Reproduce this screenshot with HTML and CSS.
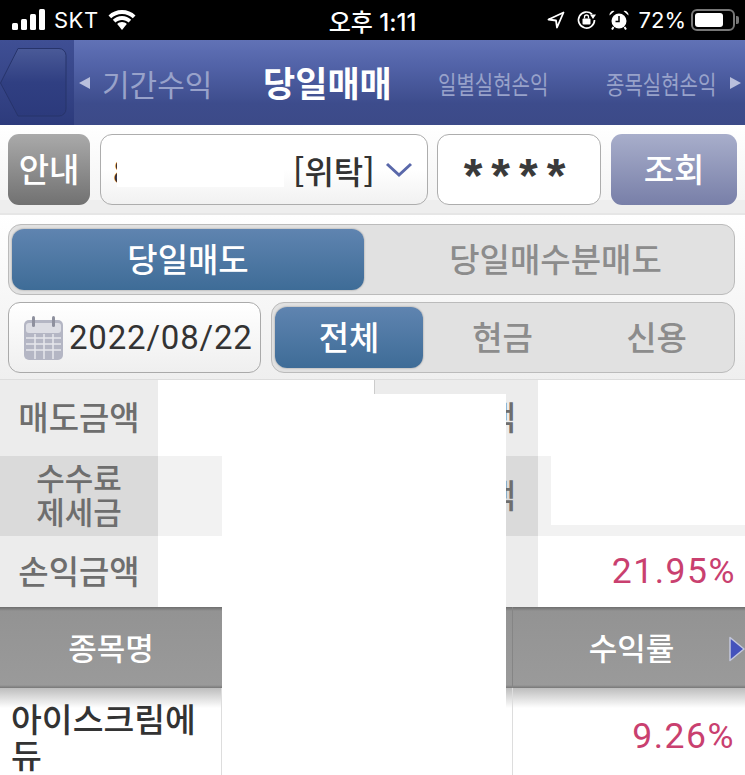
FILE: index.html
```html
<!DOCTYPE html>
<html lang="ko">
<head>
<meta charset="utf-8">
<title>당일매매</title>
<link rel="stylesheet" href="styles.css">
</head>
<body>
<div class="screen">
  <header class="status">
    <div class="status-side">
      <svg class="signal" width="34" height="24" viewBox="0 0 34 24"><rect x="0" y="15" width="6" height="7" rx="1.5"/><rect x="9" y="11" width="6" height="11" rx="1.5"/><rect x="18" y="6" width="6" height="16" rx="1.5"/><rect x="27" y="1" width="6" height="21" rx="1.5"/></svg>
      <span class="carrier">SKT</span>
      <svg class="wifi" width="30" height="22" viewBox="0 0 30 22"><path d="M15 5c4.300 0 8 1.700 10.800 4.300l2.700-2.900C24.900 3 20.200 1 15 1S5.100 3 1.500 6.400l2.700 2.900C7 6.700 10.700 5 15 5z"/><path d="M15 11c2.500 0 4.800 1 6.600 2.600l2.600-2.800C21.700 8.500 18.500 7.100 15 7.100s-6.700 1.400-9.200 3.700l2.600 2.800C10.200 12 12.500 11 15 11z"/><path d="M15 13c-1.900 0-3.500.7-4.800 1.900L15 21l4.800-6.100C18.500 13.700 16.900 13 15 13z"/></svg>
    </div>
    <div class="clock">오후 1:11</div>
    <div class="status-side status-right">
      <svg width="18" height="18" viewBox="0 0 18 18" fill="none" stroke="#fff" stroke-width="1.800" stroke-linejoin="round"><path d="M16.500 1.500 1.500 8.500 9 9.500 10 16.500z"/></svg>
      <svg class="gap-lock" width="22" height="20" viewBox="0 0 22 20" fill="none"><path d="M18.500 10a8 8 0 1 1-2.500-5.800" stroke="#fff" stroke-width="1.700"/><path d="M14 4.500h6L17 9z" fill="#fff"/><rect x="6.500" y="8.500" width="8" height="6" rx="1" fill="#fff"/><path d="M8.500 8.500V7a2 2 0 0 1 4 0v1.500" stroke="#fff" stroke-width="1.300"/></svg>
      <svg class="gap-alarm" width="22" height="22" viewBox="0 0 22 22" fill="none"><circle cx="11" cy="12" r="7.500" fill="#fff"/><path d="M11 7v5.500H7.500" stroke="#000" stroke-width="1.500"/><path d="M1.500 6.500a4 4 0 0 1 5-4.500zM20.500 6.500a4 4 0 0 0-5-4.500z" fill="#fff"/><path d="M5.500 18 4 20.500M16.500 18l1.500 2.500" stroke="#fff" stroke-width="2"/></svg>
      <span class="battery-text">72%</span>
      <div class="battery"><div class="battery-fill"></div></div>
      <div class="battery-tip"></div>
    </div>
  </header>

  <nav class="nav">
    <div class="back">
      <svg width="68" height="72" viewBox="0 0 68 72"><defs><linearGradient id="bk" x1="0" y1="0" x2="0" y2="1"><stop offset="0" stop-color="#4a5a98"/><stop offset=".5" stop-color="#303f82"/><stop offset="1" stop-color="#2c3a7c"/></linearGradient></defs><path d="M18 1.500H59a7 7 0 0 1 7 7V62a7 7 0 0 1-7 7H18L0.500 36z" fill="url(#bk)" stroke="#27346b" stroke-width="1"/></svg>
    </div>
    <div class="tabs">
      <div class="tab tab-period"><i class="tri-left"></i>기간수익</div>
      <div class="tab tab-active">당일매매</div>
      <div class="tab-narrow tab-daily"><span>일별실현손익</span></div>
      <div class="tab-narrow tab-stock"><span>종목실현손익</span><i class="tri-right"></i></div>
    </div>
  </nav>

  <section class="toolbar">
    <button class="btn btn-info">안내</button>
    <div class="field field-account">
      <span class="acc-num">8</span>
      <span class="acc-type">[위탁]</span>
      <svg width="28" height="16" viewBox="0 0 28 16" fill="none"><path d="M2 2l12 11L26 2" stroke="#5a68aa" stroke-width="3"/></svg>
    </div>
    <div class="field field-pass">****</div>
    <button class="btn btn-query">조회</button>
  </section>

  <section class="filters">
    <div class="segment segment-top">
      <div class="seg-item seg-on seg-sell">당일매도</div>
      <div class="seg-item seg-off seg-grow seg-nudge">당일매수분매도</div>
    </div>
    <div class="filter-row">
      <div class="date">
        <svg width="42" height="46" viewBox="0 0 42 46"><rect x="1" y="5" width="39" height="40" rx="5" fill="#b4b6c4"/><rect x="3" y="8" width="35" height="10" rx="3" fill="#dcdde4"/><path d="M3 23h35M3 29h35M3 35h35M12 19v25M21 19v25M30 19v25" stroke="#e6e7ec" stroke-width="1.500"/><rect x="9" y="1" width="3" height="11" rx="1.500" fill="#8e909e"/><rect x="29" y="1" width="3" height="11" rx="1.500" fill="#8e909e"/></svg>
        <span>2022/08/22</span>
      </div>
      <div class="segment segment-kind">
        <div class="seg-item seg-on seg-all">전체</div>
        <div class="seg-item seg-off seg-cash">현금</div>
        <div class="seg-item seg-off seg-grow">신용</div>
      </div>
    </div>
  </section>

  <section class="summary">
    <div class="cell label">매도금액</div><div class="cell value"></div><div class="cell label label-right label-first">매수금액</div><div class="cell value"></div>
    <div class="cell label alt two-line">수수료<br>제세금</div><div class="cell value alt-v"></div><div class="cell label alt label-right">정산금액</div><div class="cell value alt-v"></div>
    <div class="cell label">손익금액</div><div class="cell value"></div><div class="cell label label-right"></div><div class="cell value rate">21.95%</div>
  </section>

  <section class="grid-head">
    <div class="head-name">종목명</div>
    <div class="head-mid"></div>
    <div class="head-rate">수익률
      <svg class="head-arrow" width="16" height="26" viewBox="0 0 16 26"><path d="M1 1.500 15 13 1 24.500z" fill="#4452bc" stroke="#c3c7dc" stroke-width="1.500" stroke-linejoin="round"/></svg>
    </div>
  </section>
  <section class="grid-row">
    <div class="row-name">아이스크림에듀</div>
    <div class="row-mid"></div>
    <div class="row-rate">9.26%</div>
  </section>

  <div class="mask mask-account"></div>
  <div class="mask mask-center"></div>
  <div class="mask mask-right"></div>
</div>
</body>
</html>
```
FILE: styles.css
```css
* { box-sizing: border-box; }
html, body { margin: 0; padding: 0; background: #fff; }
body { font-family: "Noto Sans CJK KR", "Noto Sans", sans-serif; }
.screen { position: relative; width: 745px; height: 775px; overflow: hidden; }

.status { height: 40px; background: #000; color: #fff; display: grid; grid-template-columns: 1fr auto 1fr; align-items: center; font-family: "Noto Sans CJK KR", Inter, sans-serif; }
.status-side { display: flex; align-items: center; padding-left: 12px; fill: #fff; }
.status-right { justify-content: flex-end; padding: 0 6px 0 0; }
.carrier { font-family: Inter, sans-serif; font-size: 22px; margin: 0 8px 0 8px; letter-spacing: .5px; }
.clock { font-size: 24px; font-weight: 500; font-family: Inter, "Noto Sans CJK KR", sans-serif; }
.gap-lock { margin-left: 11px; }
.gap-alarm { margin-left: 10px; }
.battery-text { font-family: Inter, sans-serif; font-size: 22px; margin: 0 5px 0 9px; }
.battery { width: 44px; height: 22px; border: 2px solid #777; border-radius: 6px; padding: 2px; }
.battery-fill { width: 28px; height: 14px; background: #fff; border-radius: 3px; }
.battery-tip { width: 3px; height: 8px; background: #777; border-radius: 0 2px 2px 0; margin-left: 1px; }

.nav { height: 85px; display: flex; background: linear-gradient(#6172b6, #5263a8 30%, #3d4c8c 75%, #3c4a88); }
.back { width: 74px; background: linear-gradient(#3f4f94, #2d3b7c); padding: 7px 0 0 0; flex: none; }
.back svg { display: block; }
.tabs { flex: 1; position: relative; display: flex; align-items: center; color: #a3abd0; }
.tab { font-size: 30px; font-weight: 400; white-space: nowrap; display: flex; align-items: center; }
.tab-period { width: 184px; margin-left: 5px; color: #98a2ca; }
.tri-left { width: 0; height: 0; border: 6px solid transparent; border-left: 0; border-right: 11px solid #b9bfdc; margin-right: 12px; }
.tab-active { width: 175px; color: #fff; font-weight: 700; font-size: 35px; padding-bottom: 2px; }
.tab-narrow { height: 40px; display: flex; align-items: center; font-size: 25px; white-space: nowrap; color: #98a2ca; }
.tab-narrow span { display: inline-block; transform: scaleX(.8); transform-origin: left center; width: 114px; }
.tab-daily { width: 168px; }
.tab-stock { width: 139px; }
.tri-right { flex: none; width: 0; height: 0; border: 6px solid transparent; border-right: 0; border-left: 11px solid #b9bfdc; margin-left: 10px; }

.toolbar { height: 90px; display: flex; align-items: flex-start; padding: 9px 8px 0 8px; background: linear-gradient(#fff, #f4f4f4 85%, #eee 85%); border-bottom: 2px solid #e6e6e6; }
.btn { width: 82px; height: 71px; border: 0; border-radius: 11px; color: #fff; font-family: inherit; font-size: 33px; font-weight: 500; padding: 0 0 3px; flex: none; }
.btn-info { background: linear-gradient(#aaa, #717171); }
.btn-query { width: 126px; margin-left: 10px; background: linear-gradient(#a8aecb, #787fa8); }
.field { height: 71px; border: 1px solid #adadad; border-radius: 12px; background: #fff; color: #333; flex: none; }
.field-account { width: 328px; margin-left: 10px; display: flex; align-items: center; font-size: 32px; padding-left: 12px; background: linear-gradient(#fff 50%, #f1f1f1); }
.acc-num { width: 180px; }
.acc-type { margin-right: 10px; font-weight: 500; white-space: nowrap; }
.field-pass { width: 164px; margin-left: 9px; display: flex; justify-content: center; align-items: center; font-family: "Liberation Sans", sans-serif; font-weight: 700; font-size: 48px; letter-spacing: 9px; padding: 11px 4px 0 4px; color: #3a3a3a; }

.filters { height: 165px; padding: 9px 10px 0 8px; background: linear-gradient(#fff, #efefef); border-bottom: 1px solid #ddd; }
.segment { display: flex; background: #e1e1e1; border: 1px solid #bbb; border-radius: 13px; padding: 4px 3px; }
.segment-top { height: 71px; }
.seg-item { display: flex; justify-content: center; align-items: center; font-size: 33px; font-weight: 500; border-radius: 12px; padding-bottom: 3px; }
.seg-on { background: linear-gradient(#5f84b0, #3e6c97); color: #fff; box-shadow: 0 0 2px #888; }
.seg-off { color: #8c8c8c; }
.seg-sell { width: 352px; }
.seg-grow { flex: 1; }
.seg-nudge { padding-left: 16px; }
.filter-row { display: flex; margin-top: 7px; gap: 10px; }
.date { width: 253px; height: 71px; border: 1px solid #aaa; border-radius: 12px; background: linear-gradient(#fff, #efefef); display: flex; align-items: center; padding-left: 14px; font-family: Roboto, sans-serif; font-size: 33px; color: #333; gap: 4px; }
.date span { letter-spacing: .8px; }
.date svg { flex: none; }
.segment-kind { width: 464px; height: 71px; }
.seg-all { width: 148px; }
.seg-cash { width: 159px; }

.summary { display: grid; grid-template-columns: 158px 216px 164px 207px; grid-template-rows: 76px 80px 71px; height: 227px; }
.cell { display: flex; align-items: center; justify-content: center; font-size: 33px; padding-bottom: 4px; }
.label { background: #ececec; color: #6e6e6e; font-weight: 500; }
.label.alt { background: #dadada; }
.label-right { justify-content: flex-end; padding-right: 22px; }
.label-first { border-left: 1px solid #ccc; }
.two-line { font-size: 31px; line-height: 34px; text-align: center; }
.value { background: #fff; }
.alt-v { background: #f2f2f2; }
.rate { justify-content: flex-end; padding: 0 9px 2px 0; color: #c9406f; font-family: Roboto, sans-serif; font-size: 35.500px; letter-spacing: 1.500px; }

.grid-head { height: 81px; display: grid; grid-template-columns: 222px 290px 233px; background: linear-gradient(#6e6e6e, #939393 4px, #9a9a9a 78px, #777); color: #fff; font-size: 31px; font-weight: 500; }
.head-name, .head-rate { display: flex; align-items: center; justify-content: center; padding-bottom: 2px; }
.head-rate { position: relative; padding-left: 5px; border-left: 1px solid #858585; }
.head-arrow { position: absolute; right: 0; top: 29px; }

.grid-row { height: 87px; display: grid; grid-template-columns: 222px 290px 233px; background: linear-gradient(#bdbdbd, #fff 20px); }
.row-name { font-size: 33.500px; font-weight: 500; color: #333; line-height: 36px; padding: 12px 0 0 11px; word-break: break-all; border-right: 1px solid #ddd; }
.row-rate { display: flex; align-items: center; justify-content: flex-end; padding: 8px 10px 0 0; color: #c9406f; font-family: Roboto, sans-serif; font-size: 35.500px; letter-spacing: 1.500px; border-left: 1px solid #ddd; }

.mask { position: absolute; background: #fff; }
.mask-account { left: 117px; top: 160px; width: 167px; height: 27px; }
.mask-center { left: 222px; top: 394px; width: 284px; height: 381px; }
.mask-right { left: 551px; top: 456px; width: 194px; height: 69px; }
```
